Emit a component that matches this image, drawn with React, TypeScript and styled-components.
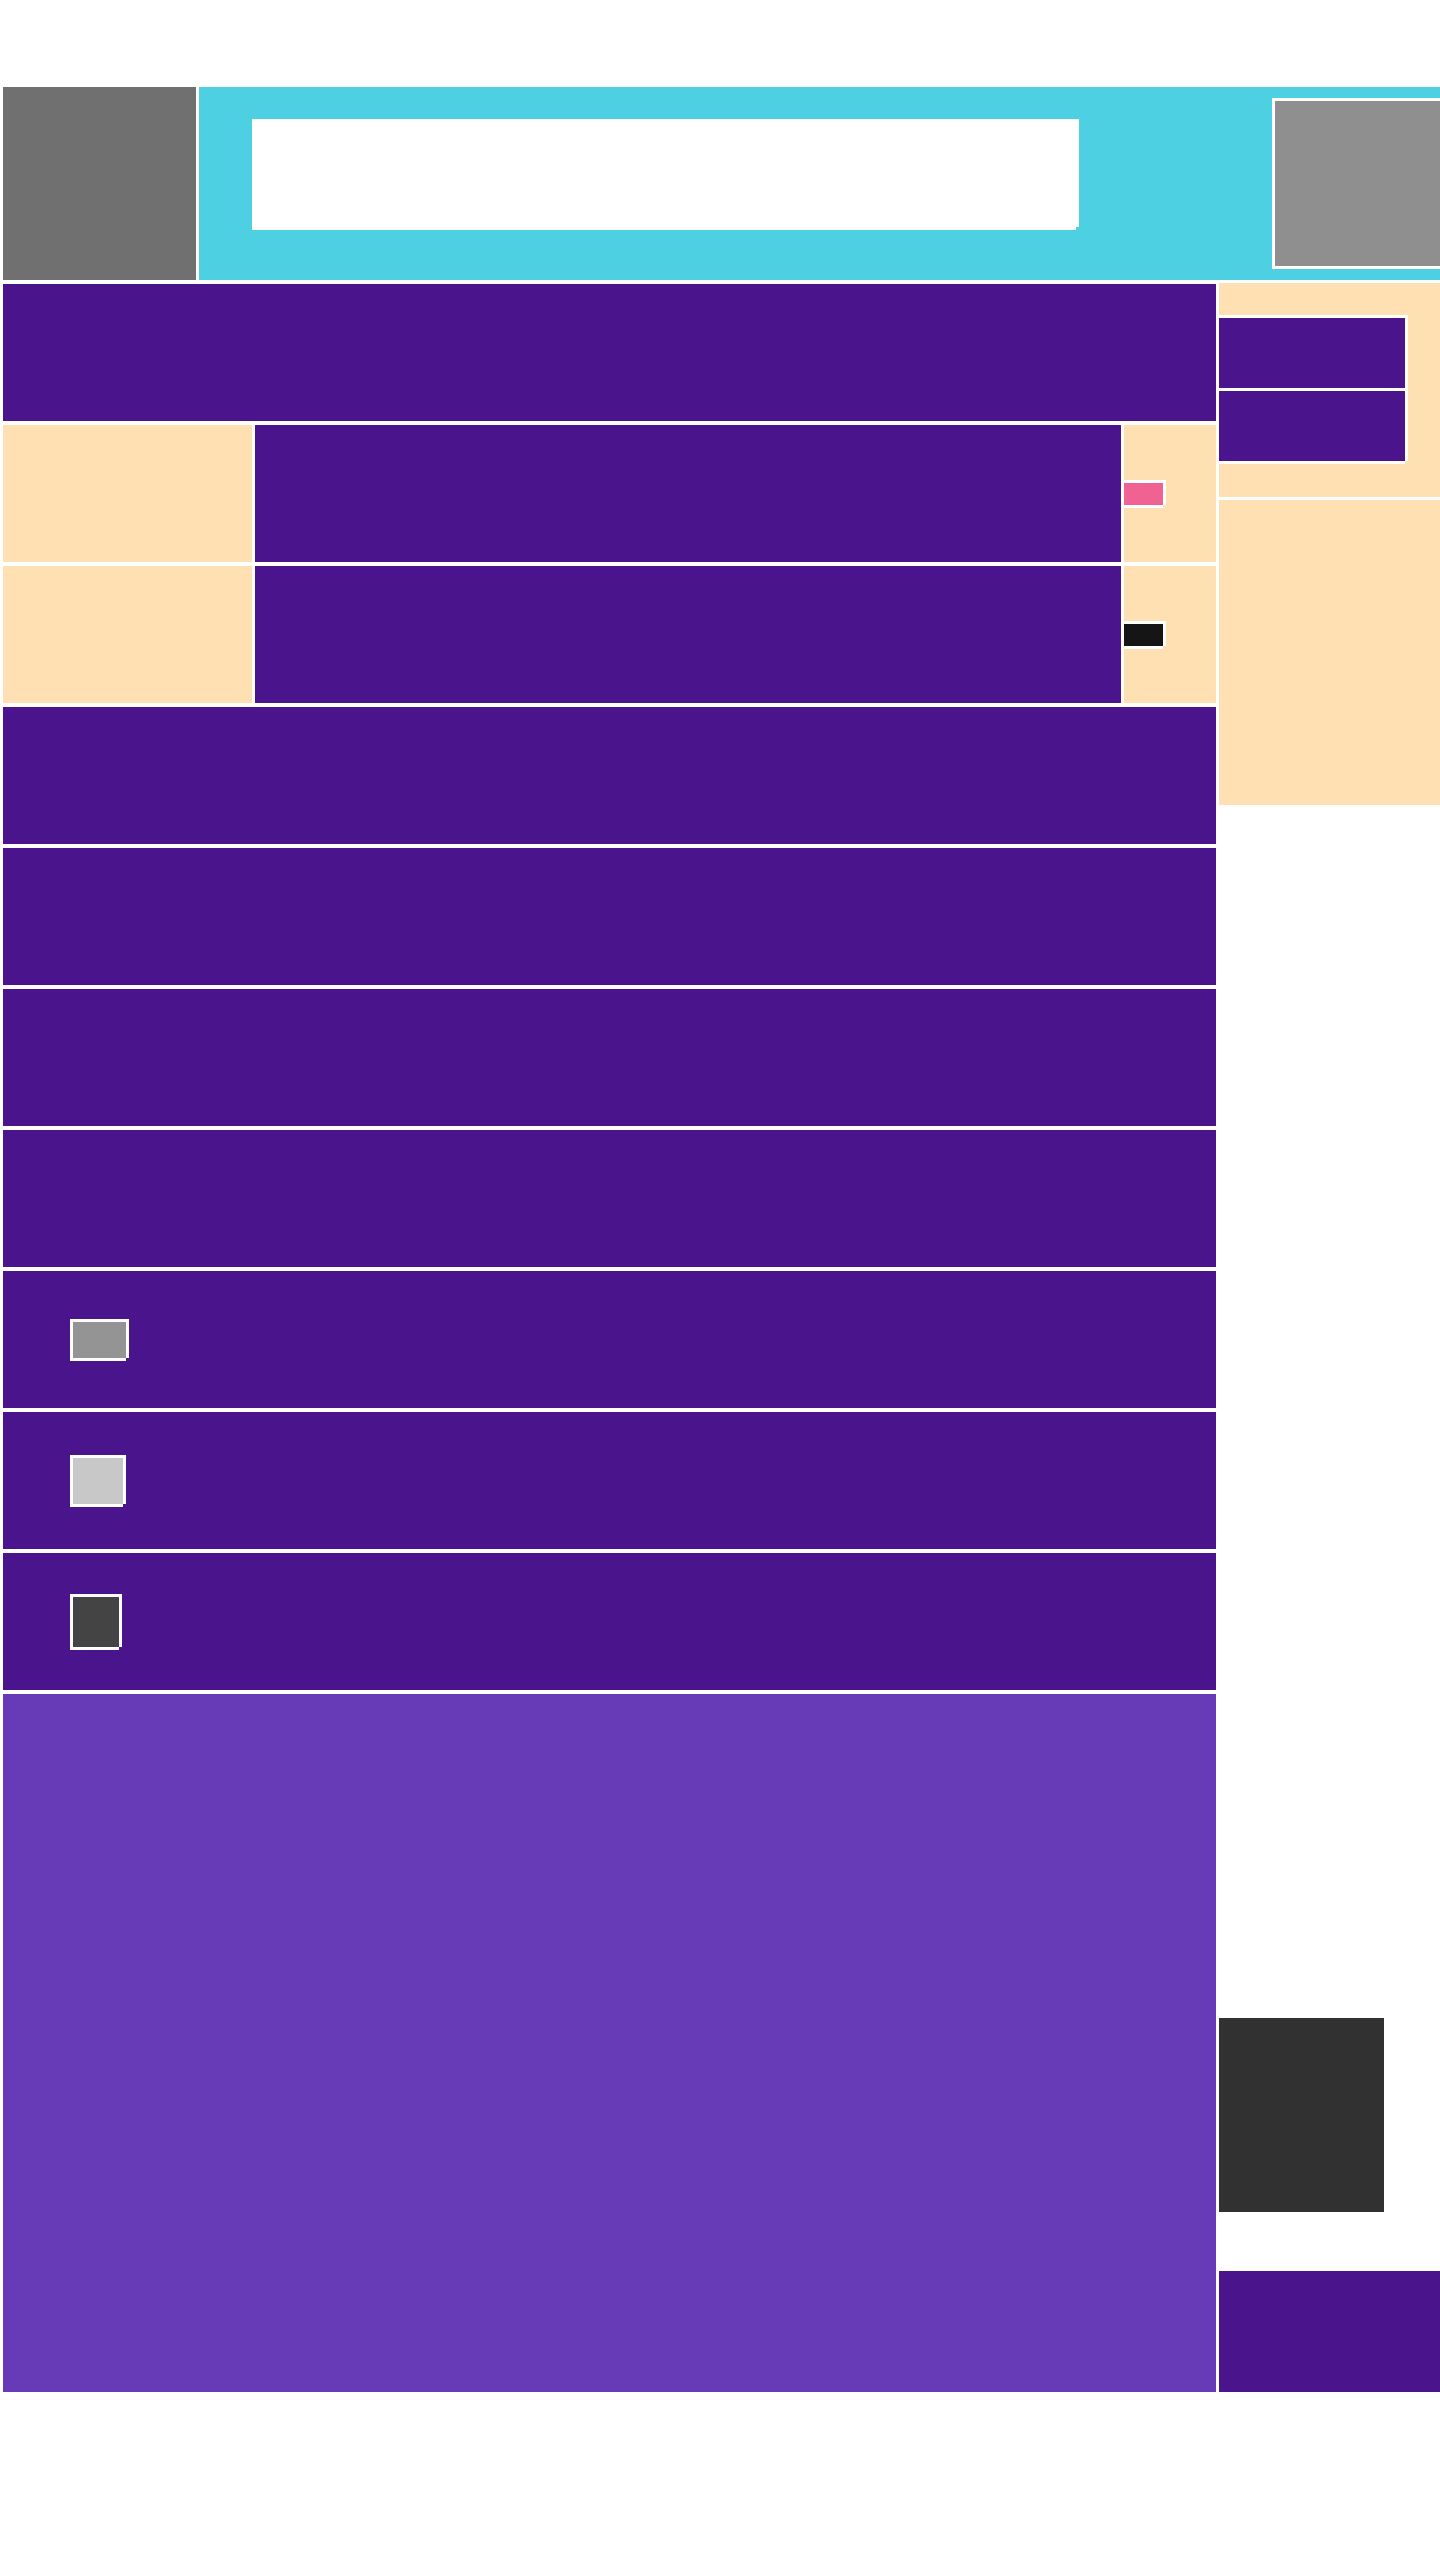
import React from "react";
import styled, { createGlobalStyle, css } from "styled-components";

const PURPLE = "#4a148c";
const LIGHT_PURPLE = "#673ab7";
const PEACH = "#ffe0b2";
const CYAN = "#4dd0e1";

const GlobalStyle = createGlobalStyle`
  html, body {
    margin: 0;
    padding: 0;
    background: #ffffff;
  }
  body {
    font-family: "Liberation Sans", Arial, sans-serif;
    overflow-x: hidden;
  }
`;

/* white 3px frame drawn around a block (bottom-right corner left open) */
const frame = css`
  box-shadow:
    -3px -3px 0 #fff,
    0 -3px 0 #fff,
    3px -3px 0 #fff,
    -3px 0 0 #fff,
    3px 0 0 #fff,
    -3px 3px 0 #fff,
    0 3px 0 #fff;
`;

const Page = styled.div`
  width: 1440px;
  box-sizing: border-box;
  padding: 87px 0 0 3px;
  overflow: hidden;
`;

const Header = styled.header`
  display: flex;
  gap: 3px;
  height: 193px;
`;

const Logo = styled.div`
  width: 193px;
  flex-shrink: 0;
  background: #707070;
`;

const SearchBar = styled.div`
  flex: 1;
  display: flex;
  align-items: flex-start;
  padding-left: 56px;
  background: ${CYAN};
  overflow: hidden;
`;

const SearchField = styled.div`
  width: 821px;
  height: 105px;
  margin-top: 35px;
  flex-shrink: 0;
  background: #ffffff;
  ${frame}
`;

const Avatar = styled.div`
  width: 180px;
  height: 165px;
  margin-left: 199px;
  align-self: center;
  flex-shrink: 0;
  background: #8f8f8f;
  ${frame}
`;

const Main = styled.main`
  display: grid;
  grid-template-columns: 1213px 221px;
  column-gap: 3px;
  margin-top: 3px;
`;

const LeftColumn = styled.section`
  display: flex;
  flex-direction: column;
  gap: 4px;
  padding-top: 1px;
`;

const Row = styled.div`
  height: 137px;
  flex-shrink: 0;
  background: ${PURPLE};
`;

const SplitRow = styled.div`
  display: grid;
  grid-template-columns: 249px 866px 92px;
  column-gap: 3px;
  height: 137px;
  flex-shrink: 0;
`;

const Cell = styled.div<{ $tone: "peach" | "purple" }>`
  display: flex;
  align-items: center;
  background: ${(p) => (p.$tone === "peach" ? PEACH : PURPLE)};
`;

const SwatchRow = styled(Row)`
  display: flex;
  align-items: center;
  padding-left: 70px;
`;

const Swatch = styled.div<{ $w: number; $h: number; $color: string }>`
  width: ${(p) => p.$w}px;
  height: ${(p) => p.$h}px;
  flex-shrink: 0;
  background: ${(p) => p.$color};
  ${frame}
`;

const Hero = styled.div`
  height: 698px;
  background: ${LIGHT_PURPLE};
`;

const RightColumn = styled.aside`
  display: flex;
  flex-direction: column;
`;

const Panel = styled.div<{ $h: number }>`
  height: ${(p) => p.$h}px;
  box-sizing: border-box;
  background: ${PEACH};
  & + & {
    margin-top: 3px;
  }
`;

const MenuPanel = styled(Panel)`
  padding-top: 35px;
`;

const MenuStack = styled.div`
  width: 186px;
  display: flex;
  flex-direction: column;
  gap: 3px;
  background: #ffffff;
  ${frame}
`;

const MenuItem = styled.div`
  height: 70px;
  background: ${PURPLE};
`;

const DarkTile = styled.div`
  width: 165px;
  height: 194px;
  margin-top: auto;
  background: #313131;
`;

const Banner = styled.div`
  height: 121px;
  margin-top: 59px;
  background: ${PURPLE};
`;

const swatches = [
  { w: 53, h: 36, color: "#949494" },
  { w: 50, h: 46, color: "#c8c8c8" },
  { w: 46, h: 50, color: "#444444" },
];

const splitSwatches = ["#f06292", "#151515"];

export default function App() {
  return (
    <>
      <GlobalStyle />
      <Page>
        <Header>
          <Logo />
          <SearchBar>
            <SearchField />
            <Avatar />
          </SearchBar>
        </Header>
        <Main>
          <LeftColumn>
            <Row />
            {splitSwatches.map((c) => (
              <SplitRow key={c}>
                <Cell $tone="peach" />
                <Cell $tone="purple" />
                <Cell $tone="peach">
                  <Swatch $w={39} $h={22} $color={c} />
                </Cell>
              </SplitRow>
            ))}
            <Row />
            <Row />
            <Row />
            <Row />
            {swatches.map((s) => (
              <SwatchRow key={s.color}>
                <Swatch $w={s.w} $h={s.h} $color={s.color} />
              </SwatchRow>
            ))}
            <Hero />
          </LeftColumn>
          <RightColumn>
            <MenuPanel $h={214}>
              <MenuStack>
                <MenuItem />
                <MenuItem />
              </MenuStack>
            </MenuPanel>
            <Panel $h={305} />
            <DarkTile />
            <Banner />
          </RightColumn>
        </Main>
      </Page>
    </>
  );
}
